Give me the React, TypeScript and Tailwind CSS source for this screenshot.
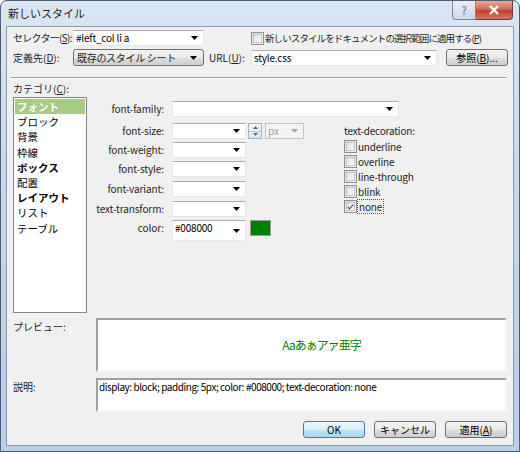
import React from "react";

const FONT = "font-['Noto_Sans_CJK_JP','Noto_Sans',sans-serif]";

function Arrow({ color = "#000" }: { color?: string }) {
  return (
    <svg width="7" height="4" viewBox="0 0 7 4" className="shrink-0">
      <path d="M0 0h7L3.5 4z" fill={color} />
    </svg>
  );
}

function Combo({ w, h = 16, text, arrow = true }: { w: number; h?: number; text?: string; arrow?: boolean }) {
  return (
    <div
      className="shrink-0 flex items-start bg-white border border-[#e3e9ef] border-t-[#abadb3] pl-[2px] pr-[5px]"
      style={{ width: w, height: h }}
    >
      <span className="flex-1 leading-[14px] text-[10px] tracking-[-0.2px] text-black truncate">{text}</span>
      {arrow && (
        <span className="self-center">
          <Arrow />
        </span>
      )}
    </div>
  );
}

function Btn({ children, def = false, w = 62 }: { children: React.ReactNode; def?: boolean; w?: number }) {
  return (
    <div
      className={
        "shrink-0 h-[17px] flex items-center justify-center rounded-[3px] border text-[10px] text-black " +
        (def
          ? "border-[#3c7fb1] bg-[linear-gradient(#eaf6fd_0%,#d9f0fc_50%,#bee6fd_51%,#a7d9f5_100%)]"
          : "border-[#707070] bg-[linear-gradient(#f2f2f2_0%,#ebebeb_50%,#dddddd_51%,#cfcfcf_100%)]")
      }
      style={{ width: w }}
    >
      {children}
    </div>
  );
}

function Check({ checked = false }: { checked?: boolean }) {
  return (
    <div className="w-[13px] h-[13px] border border-[#8e8f8f] bg-[linear-gradient(135deg,#dcdcdc,#f6f6f6)] p-[1px] shrink-0">
      <div className="w-full h-full border border-[#c4c4c4] bg-[linear-gradient(135deg,#e0e0e0,#fbfbfb)] flex items-center justify-center">
        {checked && (
          <svg width="9" height="8" viewBox="0 0 9 8">
            <path d="M1 4.2l2.3 2.3L8 1" stroke="#3a57a6" strokeWidth="1.4" fill="none" />
          </svg>
        )}
      </div>
    </div>
  );
}

function FieldRow({ label, children, mt, h = 16 }: { label: string; children: React.ReactNode; mt: number; h?: number }) {
  return (
    <div className="flex items-start" style={{ marginTop: mt, height: h }}>
      <div className="shrink-0 w-[78px] text-right text-[10px] tracking-[-0.1px] leading-[16px] text-[#1e1e1e] pr-[1px]">{label}</div>
      <div className="ml-[7px] flex items-start gap-[2px]">{children}</div>
    </div>
  );
}

const categories = [
  { name: "フォント", sel: true },
  { name: "ブロック" },
  { name: "背景" },
  { name: "枠線" },
  { name: "ボックス", bold: true },
  { name: "配置" },
  { name: "レイアウト", bold: true },
  { name: "リスト" },
  { name: "テーブル" },
];

const decorations = ["underline", "overline", "line-through", "blink", "none"];

export default function App() {
  return (
    <div className={`${FONT} whitespace-nowrap w-[520px] h-[452px] flex flex-col rounded-t-[7px] border border-[#4d5f74] bg-[linear-gradient(#dbe6f3,#c5d7ec_40%,#b9cfe8)] overflow-hidden`}>
      {/* Title bar */}
      <div className="h-[25px] flex items-start shrink-0">
        <div className="pl-[7px] pt-[4px] text-[11px] text-[#1c1c1c]">新しいスタイル</div>
        <div className="ml-auto flex mr-[6px]">
          <div className="w-[24px] h-[19px] rounded-bl-[4px] border border-t-0 border-[#7a8ba1] bg-[linear-gradient(#e9eff6,#cbd9e9)] flex items-center justify-center text-[11px] text-[#5b6678]">
            ?
          </div>
          <div className="w-[37px] h-[19px] rounded-br-[4px] border border-t-0 border-l-0 border-[#7a3a33] bg-[linear-gradient(#e9a99c,#d36a59_45%,#c2412d_55%,#d47a5f)] flex items-center justify-center">
            <svg width="12" height="10" viewBox="0 0 12 10">
              <path d="M2 1l8 8M10 1l-8 8" stroke="#fff" strokeWidth="2.4" />
            </svg>
          </div>
        </div>
      </div>

      {/* Client area */}
      <div className="ml-[5px] w-[508px] h-[420px] border border-[#8a9bb0] bg-[#f0f0f0] flex flex-col pl-[6px] pr-[6px] text-[10px] text-[#1e1e1e]">
        {/* Row 1 */}
        <div className="flex items-center h-[16px] mt-[3px]">
          <div className="shrink-0 w-[60px] leading-[16px] tracking-[-0.7px]">
            セレクター(<u>S</u>):
          </div>
          <Combo w={131} text="#left_col li a" />
          <div className="ml-[47px] flex items-center">
            <Check />
            <span className="ml-[1px] leading-[16px] text-[9.5px] tracking-[-0.9px]">
              新しいスタイルをドキュメントの選択範囲に適用する(<u>P</u>)
            </span>
          </div>
        </div>

        {/* Row 2 */}
        <div className="flex items-center h-[17px] mt-[3px]">
          <div className="shrink-0 w-[60px] leading-[16px]">
            定義先(<u>D</u>):
          </div>
          <div className="shrink-0 w-[131px] h-[17px] flex items-center rounded-[3px] border border-[#707070] bg-[linear-gradient(#f2f2f2_0%,#ebebeb_50%,#dddddd_51%,#cfcfcf_100%)] pl-[3px] pr-[6px]">
            <span className="flex-1 tracking-[-0.3px]">既存のスタイル シート</span>
            <Arrow />
          </div>
          <div className="shrink-0 w-[47px] pl-[5px]">
            URL(<u>U</u>):
          </div>
          <Combo w={186} text="style.css" />
          <div className="ml-[9px]">
            <Btn w={62}>
              参照(<u>B</u>)...
            </Btn>
          </div>
        </div>

        {/* Separator */}
        <div className="mt-[11px] ml-[-2px] h-[2px] border-t border-[#a0a0a0] border-b border-b-white" />

        <div className="mt-[3px] leading-[14px]">
          カテゴリ(<u>C</u>):
        </div>

        {/* Main */}
        <div className="flex mt-[1px] h-[216px]">
          <div className="shrink-0 w-[74px] h-[216px] border border-[#828790] bg-white p-[1px] flex flex-col">
            {categories.map((c) => (
              <div
                key={c.name}
                className={
                  "h-[15.2px] leading-[15px] pl-[2px] text-[10.5px] " +
                  (c.sel ? "bg-[#a7cc85] text-white font-bold" : c.bold ? "font-bold text-black" : "text-black")
                }
              >
                {c.name}
              </div>
            ))}
          </div>

          <div className="flex flex-col">
            <FieldRow label="font-family:" mt={4}>
              <Combo w={227} />
            </FieldRow>
            <div className="flex">
              <div className="shrink-0 w-[257px] flex flex-col">
                <FieldRow label="font-size:" mt={6}>
                  <Combo w={74} />
                  <div className="shrink-0 w-[14px] h-[16px] flex flex-col border border-[#a9b3bf] bg-[linear-gradient(#f4f6f9,#dfe5ec)]">
                    <div className="flex-1 flex items-center justify-center border-b border-[#b8c2cd]">
                      <svg width="5" height="3" viewBox="0 0 5 3">
                        <path d="M0 3h5L2.5 0z" fill="#4a6a96" />
                      </svg>
                    </div>
                    <div className="flex-1 flex items-center justify-center">
                      <svg width="5" height="3" viewBox="0 0 5 3">
                        <path d="M0 0h5L2.5 3z" fill="#4a6a96" />
                      </svg>
                    </div>
                  </div>
                  <div className="shrink-0 ml-[1px] w-[39px] h-[16px] border border-[#c5c5c5] bg-[#f4f4f4] flex items-start pl-[2px] pr-[5px]">
                    <span className="flex-1 leading-[14px] text-[#a0a0a0]">px</span>
                    <span className="self-center">
                      <Arrow color="#a8a8a8" />
                    </span>
                  </div>
                </FieldRow>
                <FieldRow label="font-weight:" mt={3}>
                  <Combo w={74} />
                </FieldRow>
                <FieldRow label="font-style:" mt={3}>
                  <Combo w={74} />
                </FieldRow>
                <FieldRow label="font-variant:" mt={4}>
                  <Combo w={74} />
                </FieldRow>
                <FieldRow label="text-transform:" mt={4}>
                  <Combo w={74} />
                </FieldRow>
                <FieldRow label="color:" mt={3} h={21}>
                  <Combo w={74} h={21} text="#008000" />
                  <div className="shrink-0 ml-[2px] w-[21px] h-[16px] border border-[#9a9a9a] bg-[#008000]" />
                </FieldRow>
              </div>

              <div className="flex flex-col mt-[7px]">
                <div className="leading-[14px] tracking-[-0.2px]">text-decoration:</div>
                <div className="flex flex-col mt-[2px] gap-[2px]">
                  {decorations.map((d) => (
                    <div key={d} className="flex items-center h-[13px]">
                      <Check checked={d === "none"} />
                      <span
                        className={
                          "ml-[1px] leading-[13px] tracking-[-0.2px] " +
                          (d === "none" ? "outline outline-1 outline-dotted outline-[#555] px-[1px]" : "")
                        }
                      >
                        {d}
                      </span>
                    </div>
                  ))}
                </div>
              </div>
            </div>
          </div>
        </div>

        {/* Preview */}
        <div className="flex mt-[5px]">
          <div className="shrink-0 w-[83px] pt-[2px] leading-[14px]">プレビュー:</div>
          <div className="w-[412px] h-[54px] border-2 border-t-[#a0a0a0] border-l-[#a0a0a0] border-b-[#f4f4f4] border-r-[#f4f4f4] bg-white flex items-center justify-center">
            <span className="text-[12px] tracking-[-1px] text-[#008000] pl-[40px]">Aaあぁアァ亜字</span>
          </div>
        </div>

        {/* Description */}
        <div className="flex mt-[6px]">
          <div className="shrink-0 w-[83px] pt-[2px] leading-[14px]">説明:</div>
          <div className="w-[412px] h-[34px] border-2 border-t-[#a0a0a0] border-l-[#a0a0a0] border-b-[#f4f4f4] border-r-[#f4f4f4] bg-white pl-[1px] leading-[13px] text-[10px] tracking-[-0.45px] text-black">
            display: block; padding: 5px; color: #008000; text-decoration: none
          </div>
        </div>

        {/* Buttons */}
        <div className="flex justify-end mt-[9px] gap-[9px]">
          <Btn def w={62}>
            OK
          </Btn>
          <Btn w={62}>キャンセル</Btn>
          <Btn w={62}>
            適用(<u>A</u>)
          </Btn>
        </div>
      </div>
    </div>
  );
}
